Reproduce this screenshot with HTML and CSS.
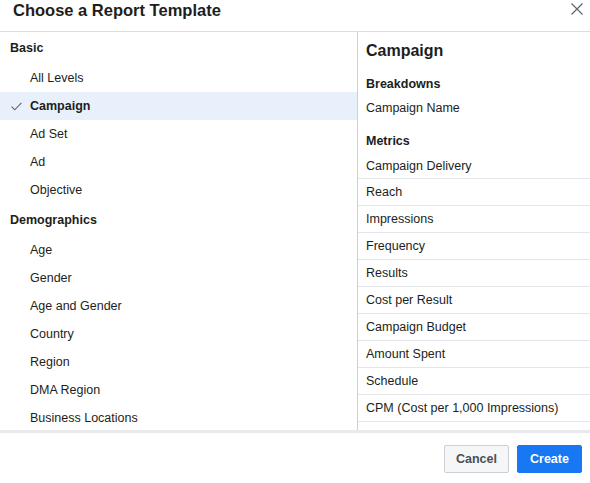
FILE: index.html
```html
<!DOCTYPE html>
<html>
<head>
<meta charset="utf-8">
<link rel="stylesheet" href="styles.css">
</head>
<body>
<div class="dialog">
  <div class="header">
    <div class="title">Choose a Report Template</div>
    <svg class="close" width="12" height="12" viewBox="0 0 12 12"><path d="M0.5 0.5L11.5 11.5M11.5 0.5L0.5 11.5" stroke="#606770" stroke-width="1.2" fill="none"/></svg>
  </div>
  <div class="main">
    <div class="left">
      <div class="group">Basic</div>
      <div class="item">All Levels</div>
      <div class="item selected"><svg class="check" width="11" height="9" viewBox="0 0 11 9"><path d="M0.6 4.6L3.8 7.8L10.4 0.8" stroke="#606770" stroke-width="1.1" fill="none"/></svg>Campaign</div>
      <div class="item">Ad Set</div>
      <div class="item">Ad</div>
      <div class="item">Objective</div>
      <div class="group">Demographics</div>
      <div class="item">Age</div>
      <div class="item">Gender</div>
      <div class="item">Age and Gender</div>
      <div class="item">Country</div>
      <div class="item">Region</div>
      <div class="item">DMA Region</div>
      <div class="item">Business Locations</div>
      <div class="item">Placement</div>
    </div>
    <div class="right">
      <div class="rtitle">Campaign</div>
      <div class="rgroup first">Breakdowns</div>
      <div class="plain">Campaign Name</div>
      <div class="rgroup">Metrics</div>
      <div class="metric">Campaign Delivery</div>
      <div class="metric">Reach</div>
      <div class="metric">Impressions</div>
      <div class="metric">Frequency</div>
      <div class="metric">Results</div>
      <div class="metric">Cost per Result</div>
      <div class="metric">Campaign Budget</div>
      <div class="metric">Amount Spent</div>
      <div class="metric">Schedule</div>
      <div class="metric">CPM (Cost per 1,000 Impressions)</div>
      <div class="metric">Link Clicks</div>
      <div class="metric">CTR (Link Click-Through Rate)</div>
    </div>
  </div>
  <div class="footer">
    <button class="btn cancel">Cancel</button>
    <button class="btn create">Create</button>
  </div>
</div>
</body>
</html>
```
FILE: styles.css
```css
* { box-sizing: border-box; }
html, body { margin: 0; padding: 0; background: #fff; }
body {
  font-family: "Liberation Sans", Arial, sans-serif;
  color: #1c1e21;
  font-size: 12.5px;
}
.dialog {
  width: 590px;
  height: 483px;
  display: flex;
  flex-direction: column;
  overflow: hidden;
}
.header {
  height: 32px;
  flex: none;
  border-bottom: 1px solid #dadde1;
  display: flex;
  align-items: flex-start;
  justify-content: space-between;
  padding: 0 7px 0 13px;
}
.title {
  font-size: 16.5px;
  font-weight: bold;
  line-height: 20px;
}
.close { margin-top: 3px; }
.main {
  flex: 1;
  display: flex;
  overflow: hidden;
  min-height: 0;
}
.left {
  width: 358px;
  flex: none;
  border-right: 1px solid #ccd0d5;
}
.group {
  height: 32px;
  line-height: 32px;
  padding-left: 10px;
  font-weight: bold;
}
.item {
  height: 28px;
  line-height: 28px;
  padding-left: 30px;
  position: relative;
}
.item.selected {
  background: #e7f0fb;
  font-weight: bold;
}
.check {
  position: absolute;
  left: 11px;
  top: 10px;
}
.right {
  flex: 1;
  min-width: 0;
}
.rtitle {
  height: 36px;
  line-height: 37px;
  padding-left: 8px;
  font-size: 16px;
  font-weight: bold;
}
.rgroup {
  height: 24px;
  line-height: 25px;
  padding-left: 8px;
  font-weight: bold;
  margin-top: 9px;
}
.rgroup.first { margin-top: 4px; }
.plain {
  height: 24px;
  line-height: 25px;
  padding-left: 8px;
}
.metric {
  height: 27px;
  line-height: 27px;
  padding-left: 8px;
  border-bottom: 1px solid #e4e6e9;
  white-space: nowrap;
}
.rgroup + .metric {
  height: 26px;
  line-height: 26px;
}
.footer {
  flex: none;
  height: 53px;
  border-top: 3px solid #e9eaec;
  display: flex;
  justify-content: flex-end;
  align-items: flex-start;
  gap: 8px;
  padding: 12px 8px 0 0;
}
.btn {
  font-family: "Liberation Sans", Arial, sans-serif;
  font-size: 12.5px;
  font-weight: bold;
  height: 28px;
  width: 65px;
  border-radius: 2px;
  padding: 0;
}
.cancel {
  background: #f5f6f7;
  border: 1px solid #ccd0d5;
  color: #4b4f56;
}
.create {
  background: #1877f2;
  border: 1px solid #1877f2;
  color: #fff;
}
```
